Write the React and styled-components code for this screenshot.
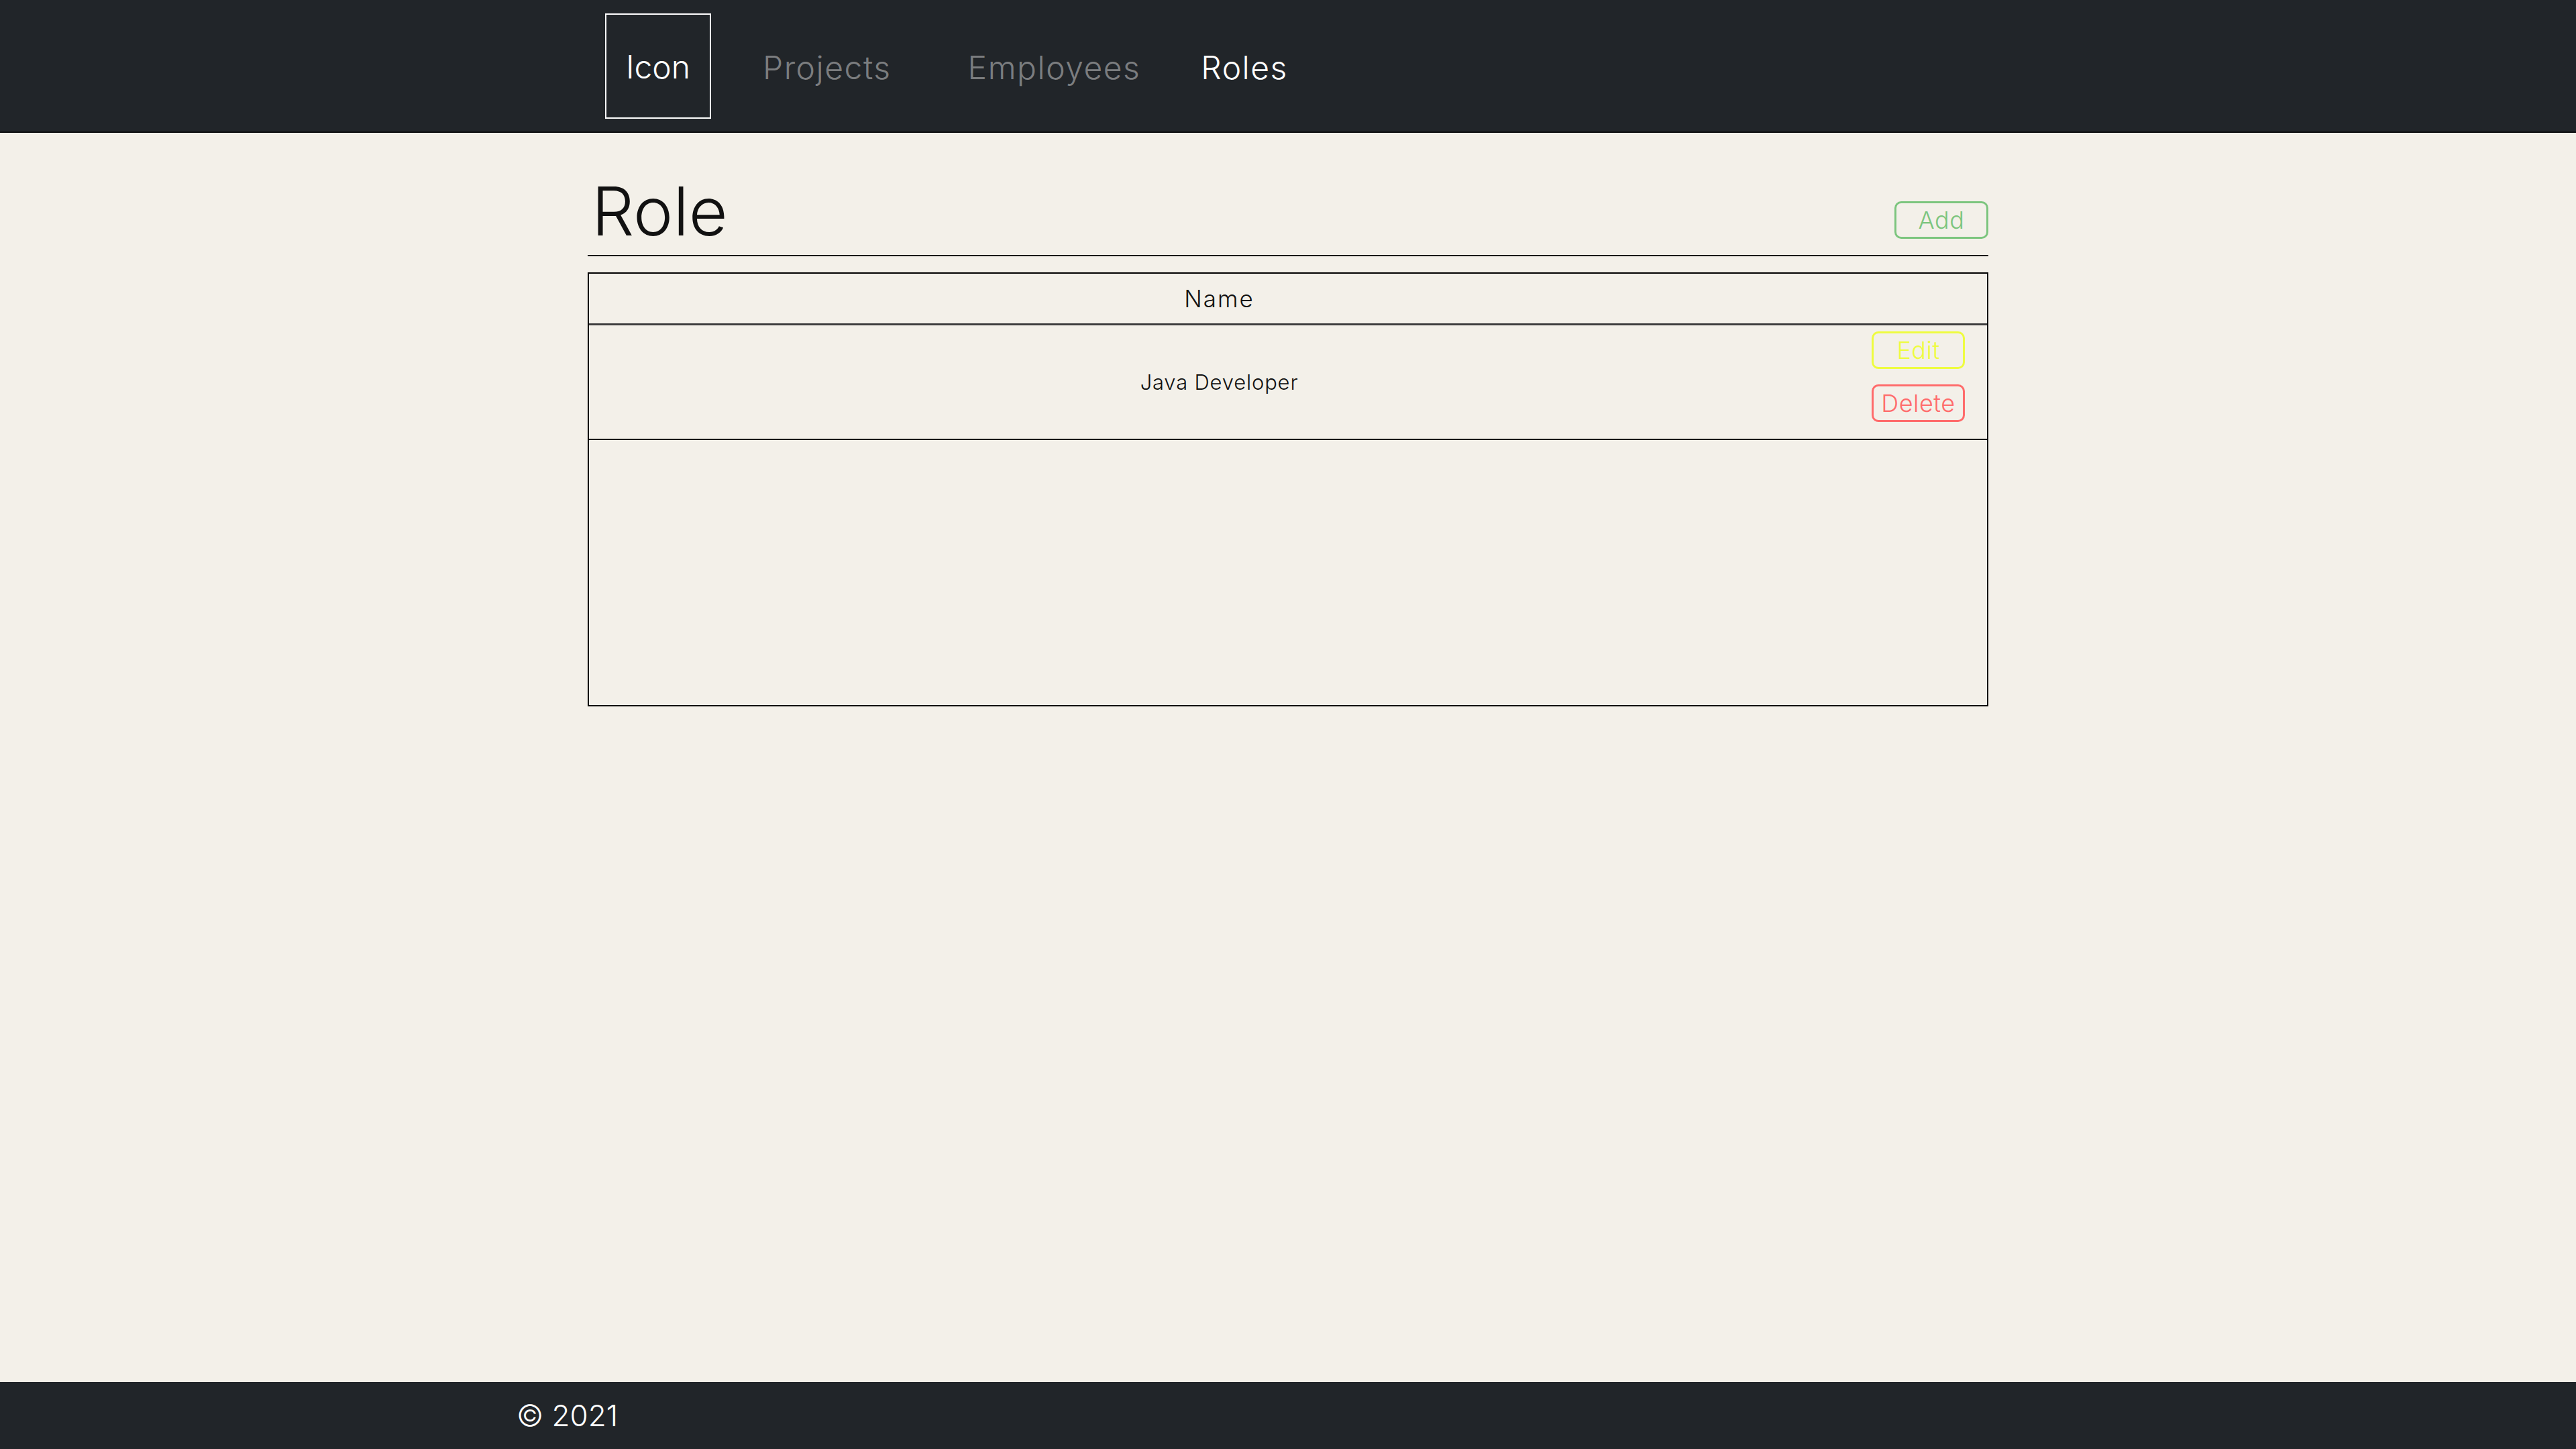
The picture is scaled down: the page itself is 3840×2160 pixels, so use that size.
import React from "react";
import styled, { createGlobalStyle } from "styled-components";

const GlobalStyle = createGlobalStyle`
  * { box-sizing: border-box; }
  html, body { margin: 0; padding: 0; }
  body {
    background: #f3f0e9;
    font-family: Inter, "Open Sans", "Liberation Sans", sans-serif;
    font-weight: 300;
    color: #111;
  }
`;

const Page = styled.div`
  min-height: 100vh;
  display: flex;
  flex-direction: column;
`;

const NavBar = styled.nav`
  background: #212529;
  height: 198px;
  border-bottom: 2px solid #0b0c0d;
`;

const NavInner = styled.div`
  width: 2088px;
  margin: 0 auto;
  padding: 20px 26px 0;
  display: flex;
  align-items: center;
`;

const Brand = styled.div`
  width: 158px;
  height: 157px;
  border: 2px solid #fff;
  display: flex;
  align-items: center;
  justify-content: center;
  padding-top: 2px;
  color: #fff;
  font-size: 48px;
  font-weight: 300;
`;

const NavLink = styled.a`
  margin-left: ${({ $offset }) => $offset}px;
  padding-top: 4px;
  font-size: 48px;
  font-weight: 300;
  letter-spacing: 1.5px;
  color: ${({ $active }) => ($active ? "#ffffff" : "rgba(255,255,255,0.42)")};
  text-decoration: none;
  cursor: pointer;
`;

const Main = styled.main`
  flex: 1;
`;

const Container = styled.div`
  width: 2088px;
  margin: 0 auto;
`;

const HeadingRow = styled.div`
  margin-top: 67px;
  display: flex;
  justify-content: space-between;
  align-items: flex-end;
  padding: 0 0 24px 6px;
  border-bottom: 2px solid #000;
`;

const Title = styled.h1`
  margin: 0 0 -9px;
  font-size: 100px;
  font-weight: 300;
  line-height: 1;
`;

const OutlineButton = styled.button`
  width: ${({ $w }) => $w || 140}px;
  height: 56px;
  padding: 0;
  background: transparent;
  border: 3px solid ${({ $color }) => $color};
  border-radius: 10px;
  color: ${({ $color }) => $color};
  font-family: inherit;
  font-weight: 300;
  font-size: 36px;
  letter-spacing: 0.5px;
  line-height: 1;
  cursor: pointer;
`;

const TableBox = styled.div`
  margin-top: 24px;
  height: 647px;
  border: 2px solid #000;
`;

const Table = styled.table`
  width: 100%;
  border-collapse: collapse;
`;

const HeadCell = styled.th`
  height: 75px;
  font-size: 35px;
  font-weight: 300;
  letter-spacing: 2px;
  text-align: center;
  border-bottom: 3px solid #3d3d3d;
  width: ${({ $w }) => ($w ? `${$w}px` : "auto")};
`;

const Cell = styled.td`
  border-bottom: 2px solid #000;
  font-size: 31px;
  letter-spacing: 0.8px;
  text-align: center;
  vertical-align: middle;
  height: 169px;
`;

const ActionCell = styled.td`
  border-bottom: 2px solid #000;
  width: 205px;
  padding: 9px 33px 25px 0;
`;

const Actions = styled.div`
  display: flex;
  flex-direction: column;
  align-items: flex-end;
  gap: 23px;
`;

const Footer = styled.footer`
  background: #212529;
  height: 100px;
  display: flex;
  align-items: center;
`;

const FooterInner = styled.div`
  width: 2300px;
  margin: 0 auto;
  color: #fff;
  font-size: 44px;
  font-weight: 300;
`;

const roles = [{ id: 1, name: "Java Developer" }];

function App() {
  return (
    <Page>
      <GlobalStyle />
      <NavBar>
        <NavInner>
          <Brand>Icon</Brand>
          <NavLink $offset={77}>Projects</NavLink>
          <NavLink $offset={114}>Employees</NavLink>
          <NavLink $offset={90} $active>Roles</NavLink>
        </NavInner>
      </NavBar>
      <Main>
        <Container>
          <HeadingRow>
            <Title>Role</Title>
            <OutlineButton $color="#7cc57e">Add</OutlineButton>
          </HeadingRow>
          <TableBox>
            <Table>
              <thead>
                <tr>
                  <HeadCell>Name</HeadCell>
                  <HeadCell $w={205}></HeadCell>
                </tr>
              </thead>
              <tbody>
                {roles.map((role) => (
                  <tr key={role.id}>
                    <Cell>{role.name}</Cell>
                    <ActionCell>
                      <Actions>
                        <OutlineButton $color="#eefc3f" $w={139}>Edit</OutlineButton>
                        <OutlineButton $color="#ff6b6b" $w={139}>Delete</OutlineButton>
                      </Actions>
                    </ActionCell>
                  </tr>
                ))}
              </tbody>
            </Table>
          </TableBox>
        </Container>
      </Main>
      <Footer>
        <FooterInner>© 2021</FooterInner>
      </Footer>
    </Page>
  );
}

export default App;
